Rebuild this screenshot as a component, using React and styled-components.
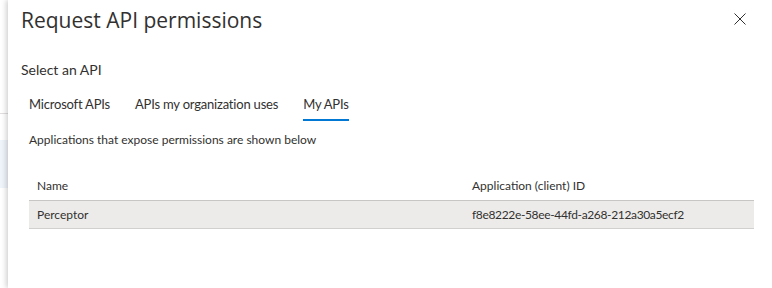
import React from "react";
import styled, { createGlobalStyle } from "styled-components";

const GlobalStyle = createGlobalStyle`
  html, body {
    margin: 0;
    padding: 0;
    background: #ffffff;
  }
  body {
    font-family: "Segoe UI", Lato, "Open Sans", sans-serif;
    color: #323130;
  }
`;

const Screen = styled.div`
  display: flex;
  width: 772px;
  height: 288px;
  overflow: hidden;
`;

const Behind = styled.div`
  width: 8px;
  flex: none;
  display: flex;
  flex-direction: column;
  background: #ffffff;
`;

const BehindBar = styled.div`
  height: 113px;
  border-bottom: 1px solid #e1dfdd;
`;

const BehindSelected = styled.div`
  margin-top: 26px;
  height: 48px;
  background: #eff4fb;
`;

const Panel = styled.div`
  flex: 1;
  background: #ffffff;
  box-shadow: -2px 0 5px rgba(0, 0, 0, 0.18);
  padding: 0 18px 0 13px;
`;

const Header = styled.div`
  display: flex;
  align-items: flex-start;
  justify-content: space-between;
  padding-top: 6px;
`;

const Title = styled.h1`
  margin: 0;
  font-family: "Segoe UI", "Open Sans", sans-serif;
  font-size: 21px;
  line-height: 28px;
  font-weight: 400;
  color: #323130;
`;

const CloseButton = styled.button`
  border: none;
  background: none;
  padding: 0;
  margin: 7px 8px 0 0;
  width: 12px;
  height: 12px;
  display: flex;
  cursor: pointer;
`;

const SectionLabel = styled.div`
  margin-top: 26px;
  font-size: 14px;
  line-height: 20px;
`;

const Tabs = styled.div`
  display: flex;
  margin-top: 14px;
  gap: 9px;
`;

const Tab = styled.div`
  position: relative;
  padding: 0 8px;
  font-size: 13px;
  letter-spacing: -0.2px;
  line-height: 20px;
  height: 30px;
  color: #323130;
  white-space: nowrap;

  &::after {
    content: "";
    position: absolute;
    left: 8px;
    right: 8px;
    bottom: 3px;
    height: 2px;
    background: ${(p) => (p.active ? "#0078d4" : "transparent")};
  }
`;

const Hint = styled.div`
  margin: 8px 0 0 8px;
  font-size: 12px;
  line-height: 16px;
`;

const Table = styled.div`
  margin: 22px 0 0 8px;
  font-size: 12px;
`;

const Row = styled.div`
  display: grid;
  grid-template-columns: 435px 1fr;
  height: ${(p) => (p.header ? "30px" : "27px")};
  align-items: center;
  padding-left: 8px;
  background: ${(p) => (p.selected ? "#edebe9" : "transparent")};
  border-bottom: 1px solid ${(p) => (p.header ? "#c8c6c4" : "#d2d0ce")};
  color: #323130;
`;

const Cell = styled.div`
  white-space: nowrap;
  letter-spacing: ${(p) => (p.tight ? "-0.35px" : "normal")};
`;

const CloseIcon = () => (
  <svg width="12" height="12" viewBox="0 0 12 12">
    <path d="M0.5 0.5 L11.5 11.5 M11.5 0.5 L0.5 11.5" stroke="#323130" strokeWidth="1" fill="none" />
  </svg>
);

const tabs = ["Microsoft APIs", "APIs my organization uses", "My APIs"];

const apps = [{ name: "Perceptor", id: "f8e8222e-58ee-44fd-a268-212a30a5ecf2" }];

const App = () => {
  return (
    <>
      <GlobalStyle />
      <Screen>
        <Behind>
          <BehindBar />
          <BehindSelected />
        </Behind>
        <Panel>
          <Header>
            <Title>Request API permissions</Title>
            <CloseButton aria-label="Close">
              <CloseIcon />
            </CloseButton>
          </Header>
          <SectionLabel>Select an API</SectionLabel>
          <Tabs>
            {tabs.map((t) => (
              <Tab key={t} active={t === "My APIs"}>
                {t}
              </Tab>
            ))}
          </Tabs>
          <Hint>Applications that expose permissions are shown below</Hint>
          <Table>
            <Row header>
              <Cell>Name</Cell>
              <Cell>Application (client) ID</Cell>
            </Row>
            {apps.map((a) => (
              <Row key={a.id} selected>
                <Cell>{a.name}</Cell>
                <Cell tight>{a.id}</Cell>
              </Row>
            ))}
          </Table>
        </Panel>
      </Screen>
    </>
  );
};

export default App;
